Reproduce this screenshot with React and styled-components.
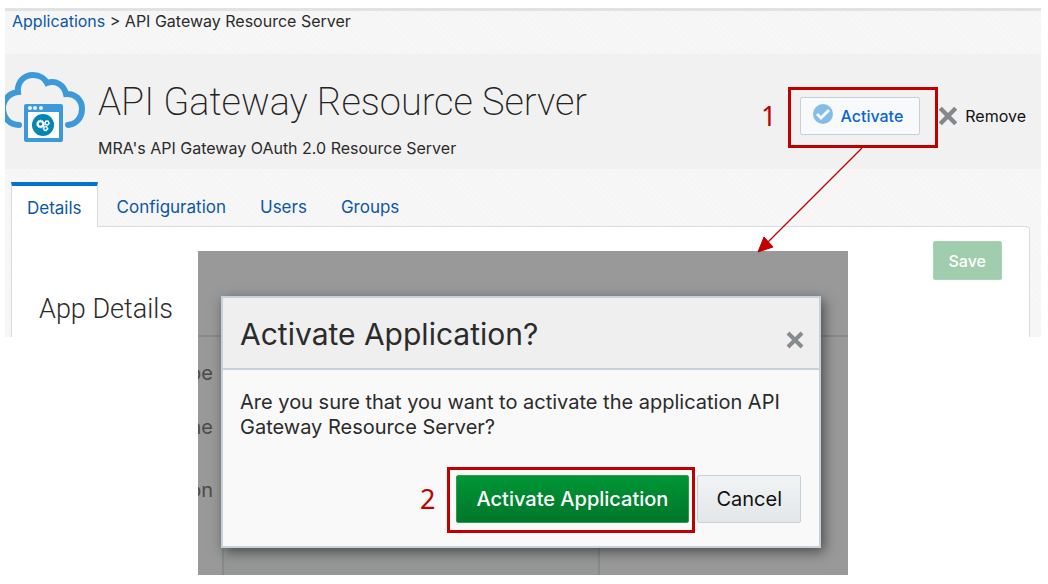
import React from "react";
import styled, { createGlobalStyle, css } from "styled-components";

const GlobalStyle = createGlobalStyle`
  *, *::before, *::after { box-sizing: border-box; }
  body {
    margin: 0;
    background: #fff;
    color: #2b2b2b;
    font-family: Inter, "Liberation Sans", sans-serif;
    font-size: 16px;
    line-height: 24px;
  }
  button { font: inherit; cursor: pointer; }
  h1, h2, p { margin: 0; }
`;

const Stage = styled.div`
  position: relative;
  min-height: 100vh;
  padding: 8px 7px 0 5px;
`;

const Page = styled.div`
  background: repeating-linear-gradient(45deg, #f5f5f5 0 2px, #f7f7f7 2px 4px);
`;

const Breadcrumb = styled.nav`
  height: 46px;
  padding-left: 7px;
  border-top: 3px solid #e2e2e2;
  line-height: 20px;
`;

const Link = styled.a`
  color: #0b57a8;
  text-decoration: none;
`;

const Banner = styled.header`
  display: flex;
  align-items: center;
  height: 115px;
  padding-right: 15px;
  background: #f1f1f1;
`;

const AppIcon = styled.svg`
  flex: none;
  width: 81px;
  height: 72px;
  margin-bottom: 8px;
`;

const Heading = styled.div`
  flex: 1;
  padding: 12px 0 0 12px;
`;

const Title = styled.h1`
  font-family: Roboto, Inter, sans-serif;
  font-size: 38px;
  font-weight: 200;
  line-height: 52px;
  white-space: nowrap;
  color: #222;
`;

const Subtitle = styled.p`
  margin-top: 8px;
  line-height: 24px;
`;

const Actions = styled.div`
  display: flex;
  align-items: center;
  gap: 17px;
  padding-bottom: 4px;
  padding-top: 12px;
`;

const ActionButton = styled.button`
  display: flex;
  align-items: center;
  gap: 8px;
  height: 38px;
  padding: 0 16px 0 12px;
  border: 1px solid #c6ced6;
  border-radius: 2px;
  background: #f7f9fb;
  color: #0b66cc;
  font-weight: 500;
  white-space: nowrap;

  ${(p) =>
    p.$plain &&
    css`
      gap: 6px;
      padding: 0;
      border: 0;
      background: none;
      color: #111;
      font-weight: 400;
    `}
`;

const Glyph = styled.svg`
  display: block;
  flex: none;
`;

const Callout = styled.div`
  position: relative;
`;

const CalloutFrame = styled.span`
  position: absolute;
  z-index: 3;
  inset: ${(p) => p.$inset};
  border: 3px solid #c00000;
  pointer-events: none;
`;

const CalloutNumber = styled.span`
  position: absolute;
  right: calc(100% + ${(p) => p.$gap});
  top: 50%;
  transform: translateY(-50%);
  color: #c00000;
  font-family: "Noto Sans", sans-serif;
  font-size: 27px;
  line-height: 32px;
`;

const Arrow = styled.svg`
  position: absolute;
  z-index: 4;
  top: 50px;
  right: 57px;
  pointer-events: none;
`;

const Tabs = styled.div`
  display: flex;
  height: 57px;
  padding: 13px 11px 0 6px;
  font-size: 17px;
`;

const Tab = styled.button`
  margin-right: 4px;
  padding: 6px 15px 0;
  border: 0;
  background: none;
  color: #0b57a8;

  ${(p) =>
    p.$active &&
    css`
      position: relative;
      height: 45px;
      border: 1px solid #d5dde3;
      border-width: 0 1px;
      border-top: 4px solid #0572ce;
      background: #fff;
      padding-top: 2px;
    `}
`;

const Panel = styled.section`
  display: flex;
  align-items: flex-start;
  justify-content: space-between;
  height: 111px;
  margin: 0 11px 0 6px;
  padding: 14px 27px 0;
  border: 1px solid #d5dde3;
  border-bottom: 0;
  border-radius: 0 4px 0 0;
  background: #fff;
`;

const PanelTitle = styled.h2`
  padding-top: 50px;
  font-family: Roboto, Inter, sans-serif;
  font-size: 27px;
  font-weight: 300;
  line-height: 36px;
`;

const SaveButton = styled.button`
  height: 39px;
  padding: 0 15px;
  border: 1px solid #a9d3b6;
  border-radius: 2px;
  background: #9fcdae;
  color: #fff;
  font-weight: 500;
`;

const Backdrop = styled.div`
  position: absolute;
  z-index: 2;
  top: 251px;
  left: 198px;
  width: 650px;
  padding: 45px 27px 27px 23px;
  background: #999;
`;

const Behind = styled.div`
  position: absolute;
  inset: 84px 0 0;
  display: grid;
  grid-template-columns: 24px 378px 1fr;
  border-top: 2px solid #868b8e;
`;

const Labels = styled.div`
  display: flex;
  flex-direction: column;
  align-items: flex-end;
  width: 15px;
  overflow: hidden;
  color: #4a4a4a;
  font-size: 20px;
  line-height: 24px;

  span:nth-child(1) { margin-top: 24px; }
  span:nth-child(2) { margin-top: 30px; }
  span:nth-child(3) { margin-top: 39px; }
`;

const FieldColumn = styled.div`
  border: 2px solid #868a8b;
  border-width: 0 2px;
  background: #949795;
`;

const Dialog = styled.div`
  position: relative;
  border: 2px solid #c5d1db;
  background: #f9f9f9;
  box-shadow: 3px 4px 12px rgba(0, 0, 0, 0.5);
`;

const DialogHeader = styled.div`
  display: flex;
  align-items: center;
  justify-content: space-between;
  height: 72px;
  padding: 2px 14px 0 17px;
  border-bottom: 2px solid #c5d1db;
  background: #efefef;
`;

const DialogTitle = styled.h2`
  font-size: 30px;
  font-weight: 400;
  line-height: 40px;
`;

const CloseButton = styled.button`
  margin-top: 12px;
  padding: 0;
  border: 0;
  background: none;
`;

const DialogText = styled.p`
  padding: 20px 16px 0 17px;
  font-size: 20px;
  line-height: 25px;
`;

const DialogFooter = styled.div`
  display: flex;
  justify-content: flex-end;
  gap: 8px;
  padding: 35px 18px 23px;
`;

const DialogButton = styled.button`
  height: 48px;
  padding: 0 18px;
  border: 1px solid #c5d1db;
  border-radius: 2px;
  background: linear-gradient(#f1f3f4, #e3e7ea);
  color: #111;
  font-size: 20px;
  white-space: nowrap;

  ${(p) =>
    p.$primary &&
    css`
      padding: 0 20px;
      border-color: #279f4d;
      background: linear-gradient(#009636, #00762b);
      color: #fff;
      font-weight: 500;
    `}
`;

function Gear({ x, y, r, w }) {
  return (
    <g stroke="#fff" fill="none">
      <circle cx={x} cy={y} r={r} strokeWidth={w} />
      <circle cx={x} cy={y} r={r + w / 2} strokeWidth="1" strokeDasharray="1.2 1.2" />
    </g>
  );
}

function CloudIcon() {
  return (
    <AppIcon viewBox="0 0 81 72" aria-hidden="true">
      <path
        d="M14 53C5 53-2 46-2 36c0-8 6-15 15-16C12 10 19 3 28 3c7 0 12 4 14 8 9-3 17 2 19 11 9-1 16 6 16 15 0 8-5 15-14 16"
        fill="none"
        stroke="#3c9adb"
        strokeWidth="6"
        strokeLinecap="round"
      />
      <path d="M19 34q0-2 2-2h35q2 0 2 2v34q0 2-2 2H21q-2 0-2-2z" fill="#3c9adb" />
      <path d="M23 40h31v26H23z" fill="#fff" />
      <circle cx="25" cy="36" r="2" fill="#e6f3fb" />
      <circle cx="30" cy="36" r="2" fill="#e6f3fb" />
      <circle cx="36" cy="36" r="2" fill="#e6f3fb" />
      <circle cx="38" cy="53" r="11" fill="#0585b3" />
      <Gear x={35.5} y={52} r={2.8} w={2} />
      <Gear x={42} y={51} r={1.8} w={1.3} />
      <Gear x={40.5} y={56.5} r={1.8} w={1.3} />
    </AppIcon>
  );
}

function CheckIcon() {
  return (
    <Glyph width="20" height="24" viewBox="0 0 20 24" aria-hidden="true">
      <circle cx="10" cy="10" r="10" fill="#84bce8" />
      <path d="M4 10l4 4 8-8" fill="none" stroke="#f7f9fb" strokeWidth="3" />
    </Glyph>
  );
}

function CrossIcon({ size, color }) {
  return (
    <Glyph width={size} height={size} viewBox="0 0 20 20" aria-hidden="true">
      <path d="M3 3l14 14M17 3L3 17" fill="none" stroke={color} strokeWidth="4" />
    </Glyph>
  );
}

export default function App() {
  return (
    <>
      <GlobalStyle />
      <Stage>
        <Page>
          <Breadcrumb aria-label="Breadcrumb">
            <Link href="#applications">Applications</Link> &gt; API Gateway Resource Server
          </Breadcrumb>
          <Banner>
            <CloudIcon />
            <Heading>
              <Title>API Gateway Resource Server</Title>
              <Subtitle>MRA's API Gateway OAuth 2.0 Resource Server</Subtitle>
            </Heading>
            <Actions>
              <Callout>
                <ActionButton type="button">
                  <CheckIcon />
                  Activate
                </ActionButton>
                <CalloutFrame $inset="-10px -18px -13px -12px" />
                <CalloutNumber $gap="23px">1</CalloutNumber>
                <Arrow width="106" height="106" viewBox="0 0 106 106" aria-hidden="true">
                  <path d="M105 1L10 96" stroke="#c00000" strokeWidth="1.3" />
                  <path d="M1 105l6-15 9 10z" fill="#c00000" stroke="#c00000" />
                </Arrow>
              </Callout>
              <ActionButton type="button" $plain>
                <CrossIcon size={22} color="#84888b" />
                Remove
              </ActionButton>
            </Actions>
          </Banner>
          <Tabs role="tablist">
            <Tab type="button" role="tab" aria-selected="true" $active>Details</Tab>
            <Tab type="button" role="tab">Configuration</Tab>
            <Tab type="button" role="tab">Users</Tab>
            <Tab type="button" role="tab">Groups</Tab>
          </Tabs>
          <Panel>
            <PanelTitle>App Details</PanelTitle>
            <SaveButton type="button">Save</SaveButton>
          </Panel>
        </Page>

        <Backdrop>
          <Behind>
            <Labels>
              <span>pe</span>
              <span>ne</span>
              <span>on</span>
            </Labels>
            <FieldColumn />
          </Behind>
          <Dialog role="dialog" aria-labelledby="dialog-title">
            <DialogHeader>
              <DialogTitle id="dialog-title">Activate Application?</DialogTitle>
              <CloseButton type="button" aria-label="Close">
                <CrossIcon size={20} color="#868b8f" />
              </CloseButton>
            </DialogHeader>
            <DialogText>
              Are you sure that you want to activate the application API Gateway Resource Server?
            </DialogText>
            <DialogFooter>
              <Callout>
                <DialogButton type="button" $primary>Activate Application</DialogButton>
                <CalloutFrame $inset="-8px -6px -10px -9px" />
                <CalloutNumber $gap="20px">2</CalloutNumber>
              </Callout>
              <DialogButton type="button">Cancel</DialogButton>
            </DialogFooter>
          </Dialog>
        </Backdrop>
      </Stage>
    </>
  );
}
